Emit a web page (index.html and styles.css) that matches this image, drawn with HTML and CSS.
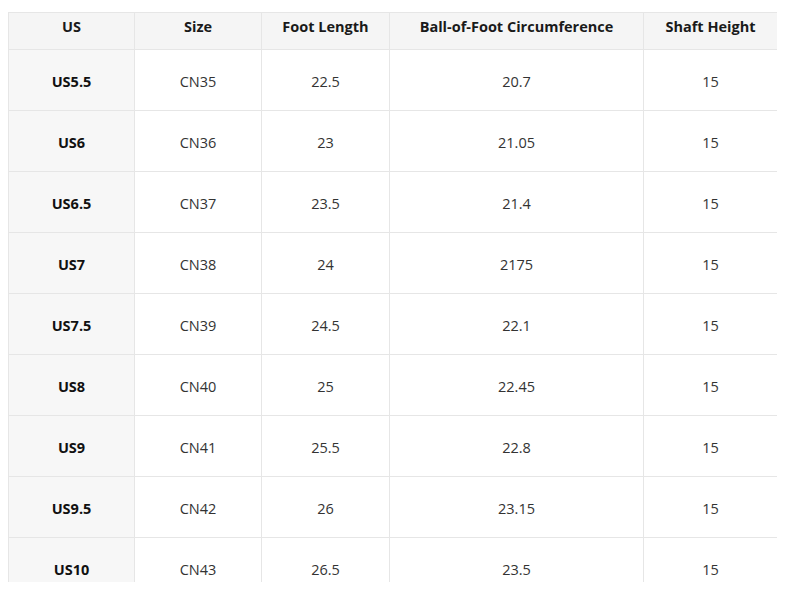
FILE: index.html
```html
<!DOCTYPE html>
<html lang="en">
<head>
<meta charset="utf-8">
<title>Size Chart</title>
<link rel="stylesheet" href="styles.css">
</head>
<body>
<div class="frame">
<table class="chart">
<colgroup>
<col class="c1"><col class="c2"><col class="c3"><col class="c4"><col class="c5">
</colgroup>
<thead>
<tr><th>US</th><th>Size</th><th>Foot Length</th><th>Ball-of-Foot Circumference</th><th>Shaft Height</th></tr>
</thead>
<tbody>
<tr><th>US5.5</th><td>CN35</td><td>22.5</td><td>20.7</td><td>15</td></tr>
<tr><th>US6</th><td>CN36</td><td>23</td><td>21.05</td><td>15</td></tr>
<tr><th>US6.5</th><td>CN37</td><td>23.5</td><td>21.4</td><td>15</td></tr>
<tr><th>US7</th><td>CN38</td><td>24</td><td>2175</td><td>15</td></tr>
<tr><th>US7.5</th><td>CN39</td><td>24.5</td><td>22.1</td><td>15</td></tr>
<tr><th>US8</th><td>CN40</td><td>25</td><td>22.45</td><td>15</td></tr>
<tr><th>US9</th><td>CN41</td><td>25.5</td><td>22.8</td><td>15</td></tr>
<tr><th>US9.5</th><td>CN42</td><td>26</td><td>23.15</td><td>15</td></tr>
<tr><th>US10</th><td>CN43</td><td>26.5</td><td>23.5</td><td>15</td></tr>
</tbody>
</table>
</div>
</body>
</html>
```
FILE: styles.css
```css
html, body {
  margin: 0;
  padding: 0;
  background: #ffffff;
}
.frame {
  margin: 12px 0 0 8px;
  width: 769px;
  height: 570px;
  overflow: hidden;
}
.chart {
  border-collapse: collapse;
  table-layout: fixed;
  width: 769px;
  font-family: "Open Sans", "Noto Sans", sans-serif;
  font-size: 14.5px;
  color: #333333;
}
.c1 { width: 126px; }
.c2 { width: 127px; }
.c3 { width: 128px; }
.c4 { width: 254px; }
.c5 { width: 134px; }
.chart th, .chart td {
  border: 1px solid #e6e6e6;
  text-align: center;
  vertical-align: top;
  line-height: 20px;
  padding: 0;
}
.chart thead th {
  background: #f5f5f5;
  color: #1a1a1a;
  font-weight: 700;
  padding: 4px 0 12px;
}
.chart tbody th {
  background: #f7f7f7;
  color: #111111;
  font-weight: 700;
}
.chart tbody th, .chart tbody td {
  padding: 22px 0 18px;
}
.chart tbody td {
  font-weight: 400;
}
```
